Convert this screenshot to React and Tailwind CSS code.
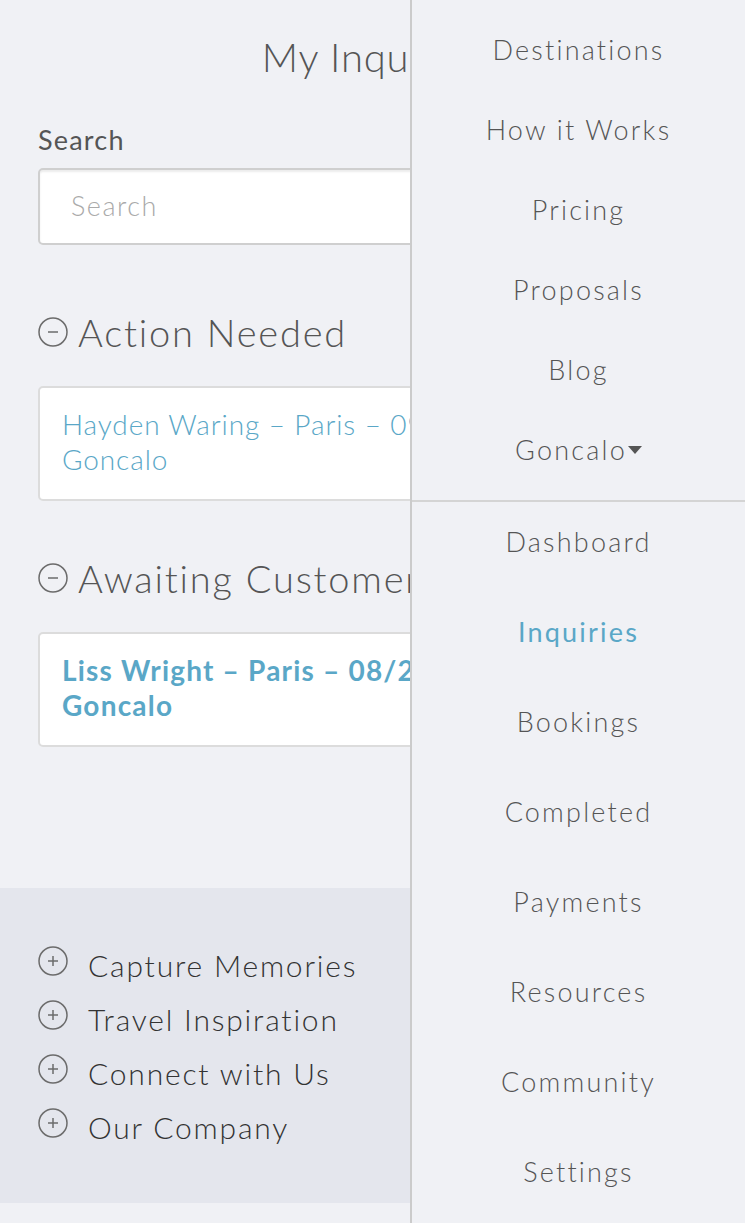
import React from "react";

const topLinks = ["Destinations", "How it Works", "Pricing", "Proposals", "Blog"];
const accountLinks = [
  "Dashboard",
  "Inquiries",
  "Bookings",
  "Completed",
  "Payments",
  "Resources",
  "Community",
  "Settings",
];
const footerLinks = ["Capture Memories", "Travel Inspiration", "Connect with Us", "Our Company"];

function CircleIcon({ plus }) {
  return (
    <svg width="30" height="30" viewBox="0 0 30 30" fill="none" stroke="#6b6b6b" strokeWidth="1.5">
      <circle cx="15" cy="15" r="14" />
      <path d="M10 15h10" />
      {plus && <path d="M15 10v10" />}
    </svg>
  );
}

function Section({ title, children }) {
  return (
    <div>
      <h2 className="flex items-center gap-[10px] h-[44px] text-[38px] leading-[44px] font-light tracking-[1.8px] text-[#555] whitespace-nowrap">
        <CircleIcon />
        {title}
      </h2>
      {children}
    </div>
  );
}

export default function App() {
  return (
    <div
      className="relative w-[745px] h-[1223px] overflow-hidden bg-[#f0f1f5]"
      style={{ fontFamily: "Lato, 'Open Sans', sans-serif" }}
    >
      <main className="w-[745px]">
        <h1 className="pt-[33px] text-center text-[40px] leading-[48px] font-light tracking-[0.8px] text-[#555]">
          My Inquiries
        </h1>

        <div className="px-[38px]">
          <label className="block mt-[43px] text-[27px] leading-[32px] tracking-[1.2px] text-[#555]">Search</label>
          <div className="mt-[12px] h-[77px] rounded-[5px] border-2 border-[#cfcfcf] bg-white shadow-[inset_0_2px_2px_rgba(0,0,0,0.08)] flex items-center px-[31px]">
            <span className="text-[27px] font-light tracking-[1.5px] text-[#aaa]">Search</span>
          </div>

          <div className="mt-[65px]">
            <Section title="Action Needed">
              <div className="mt-[32px] h-[115px] rounded-[5px] border-2 border-[#dcdcdc] bg-white px-[22px] py-[19px]">
                <p className="text-[28px] leading-[35px] font-light tracking-[0.9px] text-[#5aa7c7]">
                  Hayden Waring – Paris – 09/12/2017 –<br />
                  Goncalo
                </p>
              </div>
            </Section>
          </div>

          <div className="mt-[55px]">
            <Section title="Awaiting Customer">
              <div className="mt-[32px] h-[115px] rounded-[5px] border-2 border-[#dcdcdc] bg-white px-[22px] py-[19px]">
                <p className="text-[28px] leading-[35px] font-bold tracking-[1.2px] text-[#5aa7c7]">
                  Liss Wright – Paris – 08/21/2017 –<br />
                  Goncalo
                </p>
              </div>
            </Section>
          </div>
        </div>

        <footer className="mt-[141px] h-[315px] bg-[#e4e6ed] px-[38px] pt-[50px]">
          {footerLinks.map((l) => (
            <div key={l} className="flex items-center gap-[20px] h-[54px]">
              <span className="-mt-[8px]">
                <CircleIcon plus />
              </span>
              <span className="text-[30px] leading-[54px] font-light tracking-[1.8px] text-[#333]">{l}</span>
            </div>
          ))}
        </footer>
      </main>

      <aside className="absolute top-0 right-0 h-full w-[335px] border-l-2 border-[#cbcbcb] bg-[#f0f1f5]">
        <nav className="pt-[10px] pb-[10px] border-b-2 border-[#d4d4d4]">
          {topLinks.map((l) => (
            <div key={l} className="h-[80px] flex items-center justify-center text-[27px] font-light tracking-[2.2px] text-[#555]">
              {l}
            </div>
          ))}
          <div className="h-[80px] flex items-center justify-center text-[27px] font-light tracking-[2.2px] text-[#555]">
            Goncalo
            <svg width="14" height="8" viewBox="0 0 14 8" className="ml-[1px]">
              <path d="M0 0h14L7 8z" fill="#555" />
            </svg>
          </div>
        </nav>
        <nav className="flex flex-col gap-[10px]">
          {accountLinks.map((l) => (
            <div
              key={l}
              className={`h-[80px] flex items-center justify-center text-[27px] tracking-[2.2px] ${
                l === "Inquiries" ? "text-[#5aa7c7] font-normal" : "text-[#555] font-light"
              }`}
            >
              {l}
            </div>
          ))}
        </nav>
      </aside>
    </div>
  );
}
